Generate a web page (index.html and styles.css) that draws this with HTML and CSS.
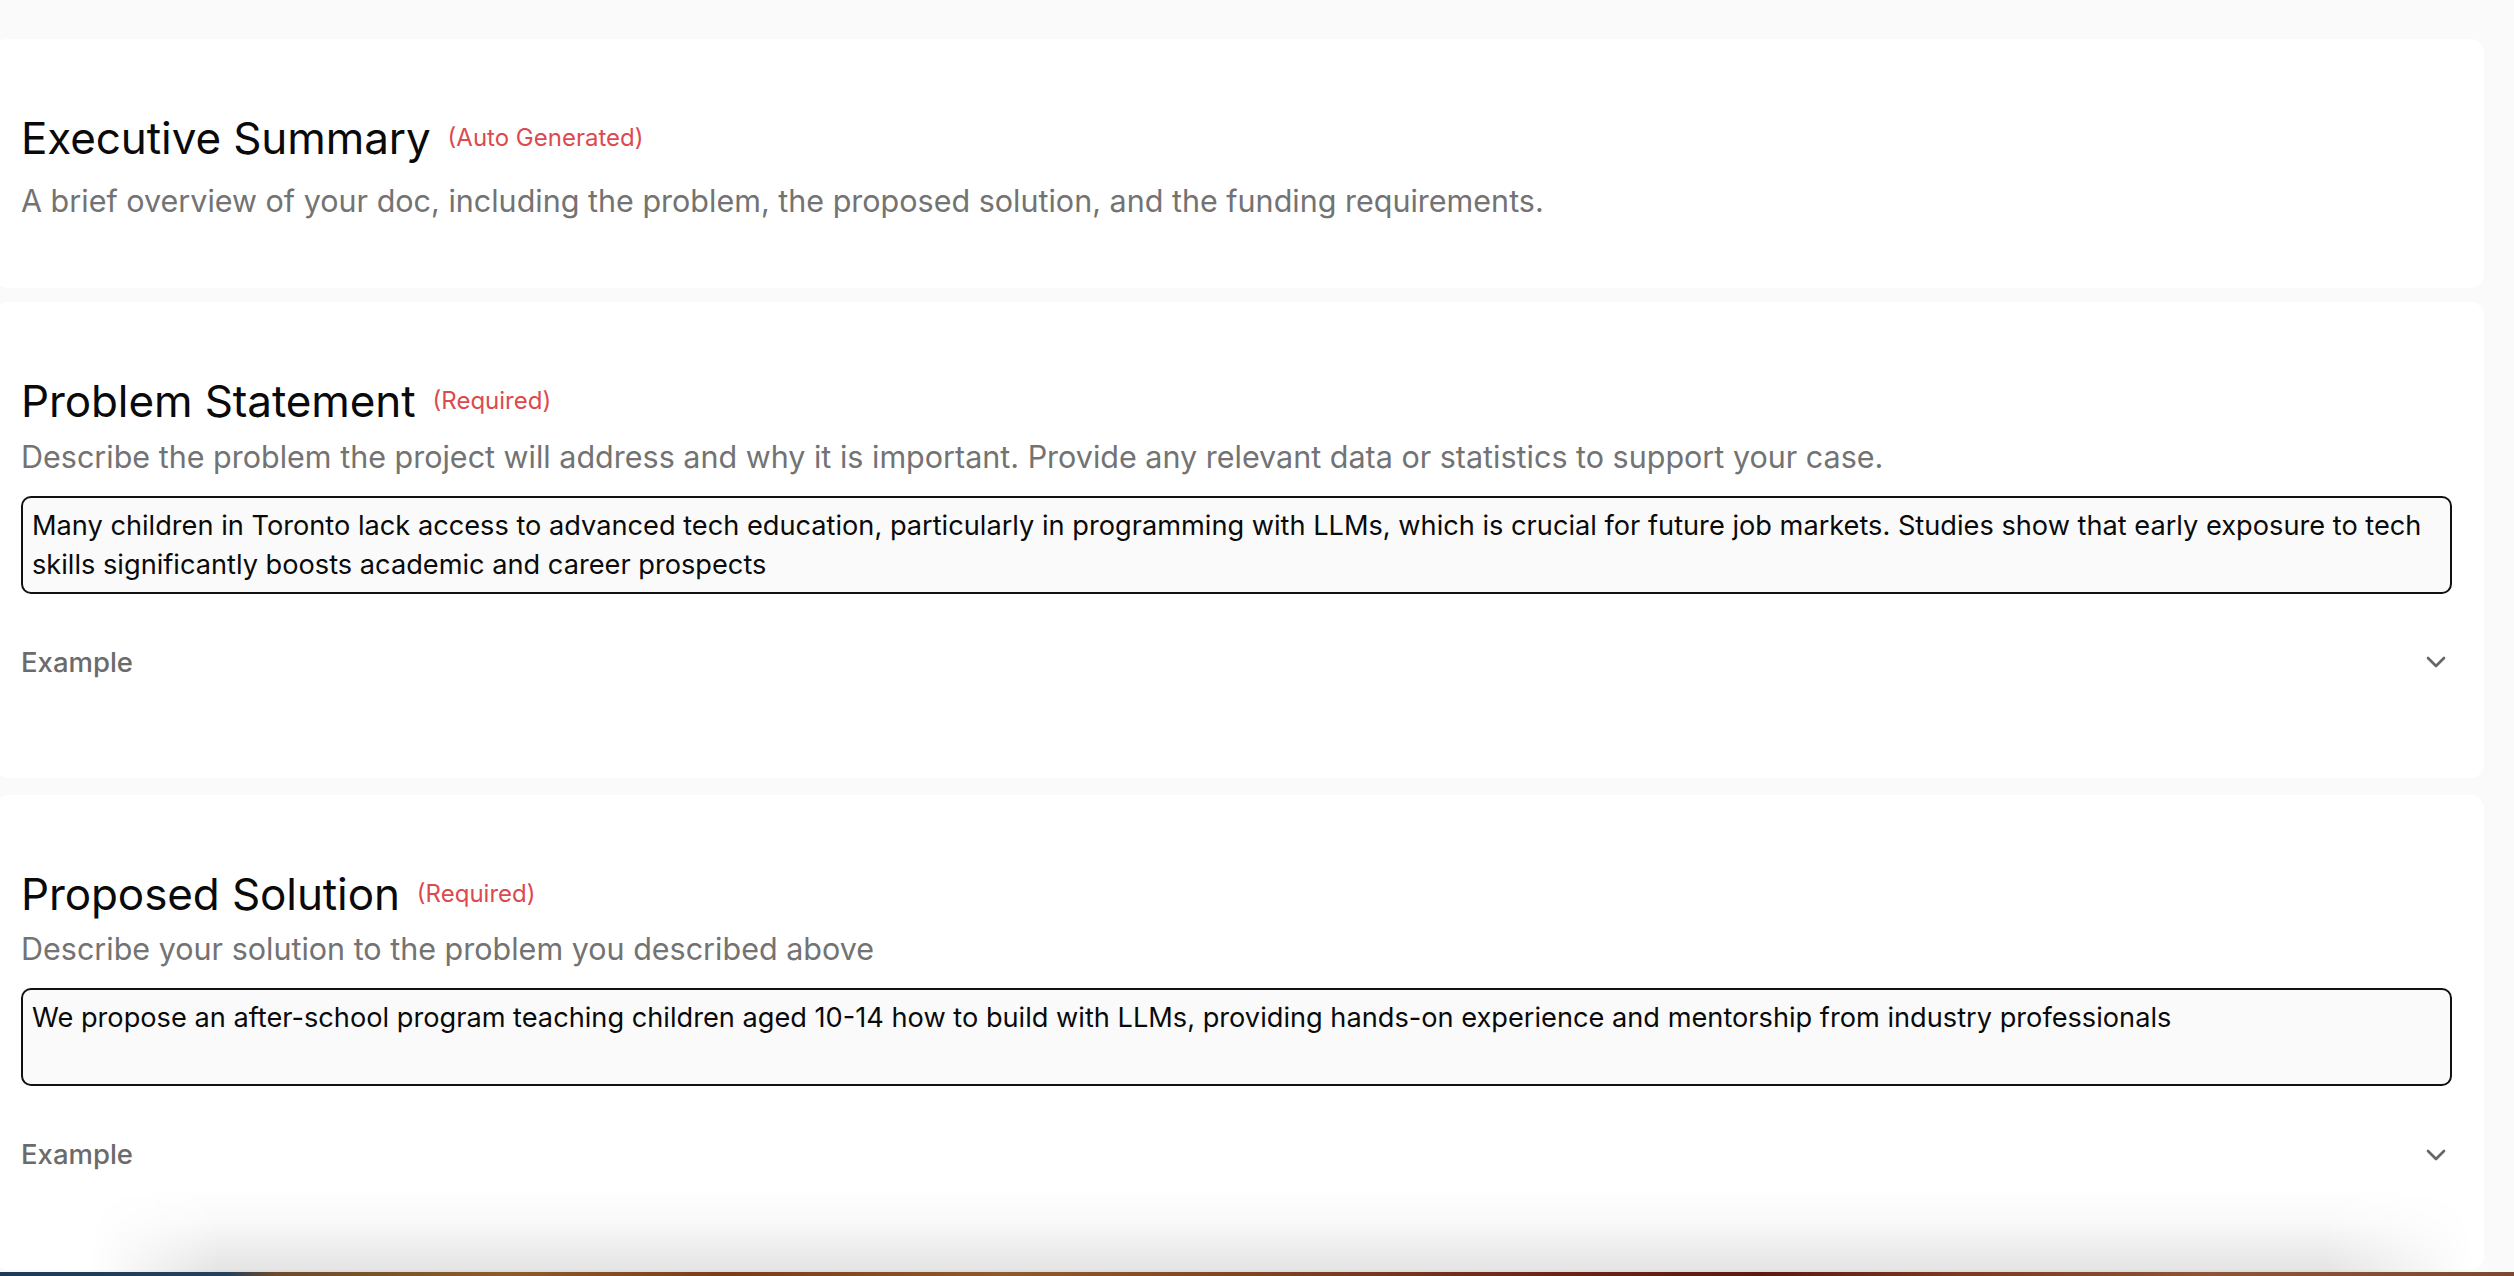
FILE: index.html
```html
<!DOCTYPE html>
<html lang="en">
<head>
<meta charset="utf-8">
<title>Proposal</title>
<link rel="stylesheet" href="styles.css">
</head>
<body>
<main class="page">
  <section class="card card-summary">
    <div class="head">
      <h2 class="title">Executive Summary</h2>
      <span class="tag">(Auto Generated)</span>
    </div>
    <p class="desc desc-first">A brief overview of your doc, including the problem, the proposed solution, and the funding requirements.</p>
  </section>

  <section class="card">
    <div class="head">
      <h2 class="title">Problem Statement</h2>
      <span class="tag">(Required)</span>
    </div>
    <p class="desc">Describe the problem the project will address and why it is important. Provide any relevant data or statistics to support your case.</p>
    <textarea class="field">Many children in Toronto lack access to advanced tech education, particularly in programming with LLMs, which is crucial for future job markets. Studies show that early exposure to tech skills significantly boosts academic and career prospects</textarea>
    <div class="example">
      <span class="example-label">Example</span>
      <svg class="chev" viewBox="0 0 24 24" width="32" height="32" fill="none" stroke="currentColor" stroke-width="2" stroke-linecap="round" stroke-linejoin="round"><path d="m6 9 6 6 6-6"/></svg>
    </div>
  </section>

  <section class="card card-solution">
    <div class="head">
      <h2 class="title">Proposed Solution</h2>
      <span class="tag">(Required)</span>
    </div>
    <p class="desc">Describe your solution to the problem you described above</p>
    <textarea class="field">We propose an after-school program teaching children aged 10-14 how to build with LLMs, providing hands-on experience and mentorship from industry professionals</textarea>
    <div class="example">
      <span class="example-label">Example</span>
      <svg class="chev" viewBox="0 0 24 24" width="32" height="32" fill="none" stroke="currentColor" stroke-width="2" stroke-linecap="round" stroke-linejoin="round"><path d="m6 9 6 6 6-6"/></svg>
    </div>
  </section>
</main>
<div class="dock-shadow"></div>
<div class="desk-strip"></div>
</body>
</html>
```

FILE: styles.css
```css
html, body {
  margin: 0;
  padding: 0;
  height: 100%;
  overflow: hidden;
  background: #fafafa;
}

body {
  font-family: Inter, "Noto Sans", "Liberation Sans", sans-serif;
  color: #0a0a0a;
}

.page {
  display: flex;
  flex-direction: column;
  gap: 14px;
  padding: 39px 30px 0 0;
  margin-left: -6px;
}

.card {
  background: #ffffff;
  border-radius: 14px;
  padding: 73px 32px 100px 27px;
  display: flex;
  flex-direction: column;
}

.card-summary {
  padding-bottom: 70px;
}

.card-solution {
  margin-top: 3px;
}

.head {
  display: flex;
  align-items: center;
  gap: 17px;
}

.title {
  margin: 0;
  font-size: 44px;
  font-weight: 400;
  line-height: 1.2;
  letter-spacing: -0.1px;
  color: #0a0a0a;
}

.tag {
  font-size: 24px;
  line-height: 1.2;
  color: #dc4a4f;
}

.desc {
  margin: 11px 0 0;
  font-size: 30.5px;
  line-height: 35px;
  color: #737373;
}

.desc-first {
  margin-top: 18px;
}

.field {
  box-sizing: border-box;
  display: block;
  width: 100%;
  height: 98px;
  margin: 22px 0 0;
  padding: 8px 9px;
  border: 2px solid #111111;
  border-radius: 10px;
  background: #fafafa;
  font-family: Inter, "Noto Sans", "Liberation Sans", sans-serif;
  font-size: 27.2px;
  line-height: 39px;
  color: #0a0a0a;
  resize: none;
  overflow: hidden;
  outline: none;
}

.example {
  margin-top: 53px;
  display: flex;
  align-items: center;
  justify-content: space-between;
  height: 31px;
}

.example-label {
  font-size: 27.5px;
  line-height: 31px;
  font-weight: 500;
  color: #6b6b6b;
}

.chev {
  color: #666666;
  display: block;
}

.dock-shadow {
  position: fixed;
  left: 90px;
  right: 40px;
  bottom: 4px;
  height: 84px;
  background: linear-gradient(to bottom, rgba(0,0,0,0) 0%, rgba(0,0,0,0.025) 40%, rgba(0,0,0,0.11) 100%);
  -webkit-mask-image: linear-gradient(to right, transparent 0, #000 130px, #000 calc(100% - 150px), transparent 100%);
  mask-image: linear-gradient(to right, transparent 0, #000 130px, #000 calc(100% - 150px), transparent 100%);
  pointer-events: none;
}

.desk-strip {
  position: fixed;
  left: 0;
  right: 0;
  bottom: 0;
  height: 4px;
  background: linear-gradient(to right, #1d3a5a 0%, #24405c 9%, #6e4a2a 11%, #8a5c2c 20%, #7a3b1d 29%, #8c5a2f 40%, #7a3f22 52%, #6a2416 62%, #5a1a12 70%, #7c3a20 78%, #8a5636 88%, #7a4a30 100%);
}
```
